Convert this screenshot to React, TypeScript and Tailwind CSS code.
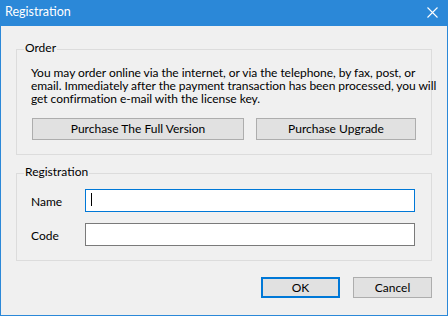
import React from "react";

export default function App() {
  const font = { fontFamily: 'Lato, "Liberation Sans", sans-serif' };
  return (
    <div
      className="w-[448px] h-[316px] flex flex-col bg-[#f0f0f0] border border-t-0 border-[#2b88d8] text-[12px] text-black overflow-hidden"
      style={font}
    >
      {/* Title bar */}
      <div className="h-[26px] shrink-0 bg-[#2b88d8] flex items-center justify-between pl-[4px] pr-[9px] text-white">
        <span className="text-[12.5px] leading-[26px] -mt-[2px]">Registration</span>
        <svg width="11" height="11" viewBox="0 0 11 11" className="-mt-[1px]">
          <path d="M0.5 0.5 L10.5 10.5 M10.5 0.5 L0.5 10.5" stroke="white" strokeWidth="1.1" fill="none" />
        </svg>
      </div>

      {/* Body */}
      <div className="flex flex-col px-[15px] pt-[23px]">
        {/* Order group */}
        <div className="relative border border-[#dcdcdc] pl-[14px] pr-[15px] pt-[16px] pb-[14px]">
          <span className="absolute left-[7px] -top-[10px] px-[1px] leading-[15px] bg-[#f0f0f0]">Order</span>
          <p className="leading-[13px] whitespace-nowrap tracking-[-0.05px]">
            You may order online via the internet, or via the telephone, by fax, post, or
            <br />
            email. Immediately after the payment transaction has been processed, you will
            <br />
            get confirmation e-mail with the license key.
          </p>
          <div className="flex gap-[12px] mt-[13px] pl-[1px]">
            <button className="w-[212px] h-[22px] bg-[#e1e1e1] border border-[#adadad] leading-[20px]">
              Purchase The Full Version
            </button>
            <button className="w-[160px] h-[22px] bg-[#e1e1e1] border border-[#adadad] leading-[20px]">
              Purchase Upgrade
            </button>
          </div>
        </div>

        {/* Registration group */}
        <div className="relative mt-[18px] border border-[#dcdcdc] pl-[14px] pr-[16px] pt-[15px] pb-[14px] flex flex-col gap-[11px]">
          <span className="absolute left-[7px] -top-[10px] px-[1px] leading-[15px] bg-[#f0f0f0]">Registration</span>
          <div className="flex items-center">
            <span className="w-[54px] pt-[2px]">Name</span>
            <div className="w-[330px] h-[23px] bg-white border border-[#0078d7] flex items-center pl-[5px]">
              <span className="w-px h-[13px] bg-black -mt-[2px]" />
            </div>
          </div>
          <div className="flex items-center">
            <span className="w-[54px] pt-[2px]">Code</span>
            <div className="w-[330px] h-[23px] bg-white border border-[#7a7a7a]" />
          </div>
        </div>

        {/* Footer */}
        <div className="flex justify-end gap-[13px] mt-[16px]">
          <button className="w-[79px] h-[21px] bg-[#e1e1e1] border-2 border-[#0078d7] leading-[17px]">OK</button>
          <button className="w-[79px] h-[21px] bg-[#e1e1e1] border border-[#adadad] leading-[19px]">Cancel</button>
        </div>
      </div>
    </div>
  );
}
